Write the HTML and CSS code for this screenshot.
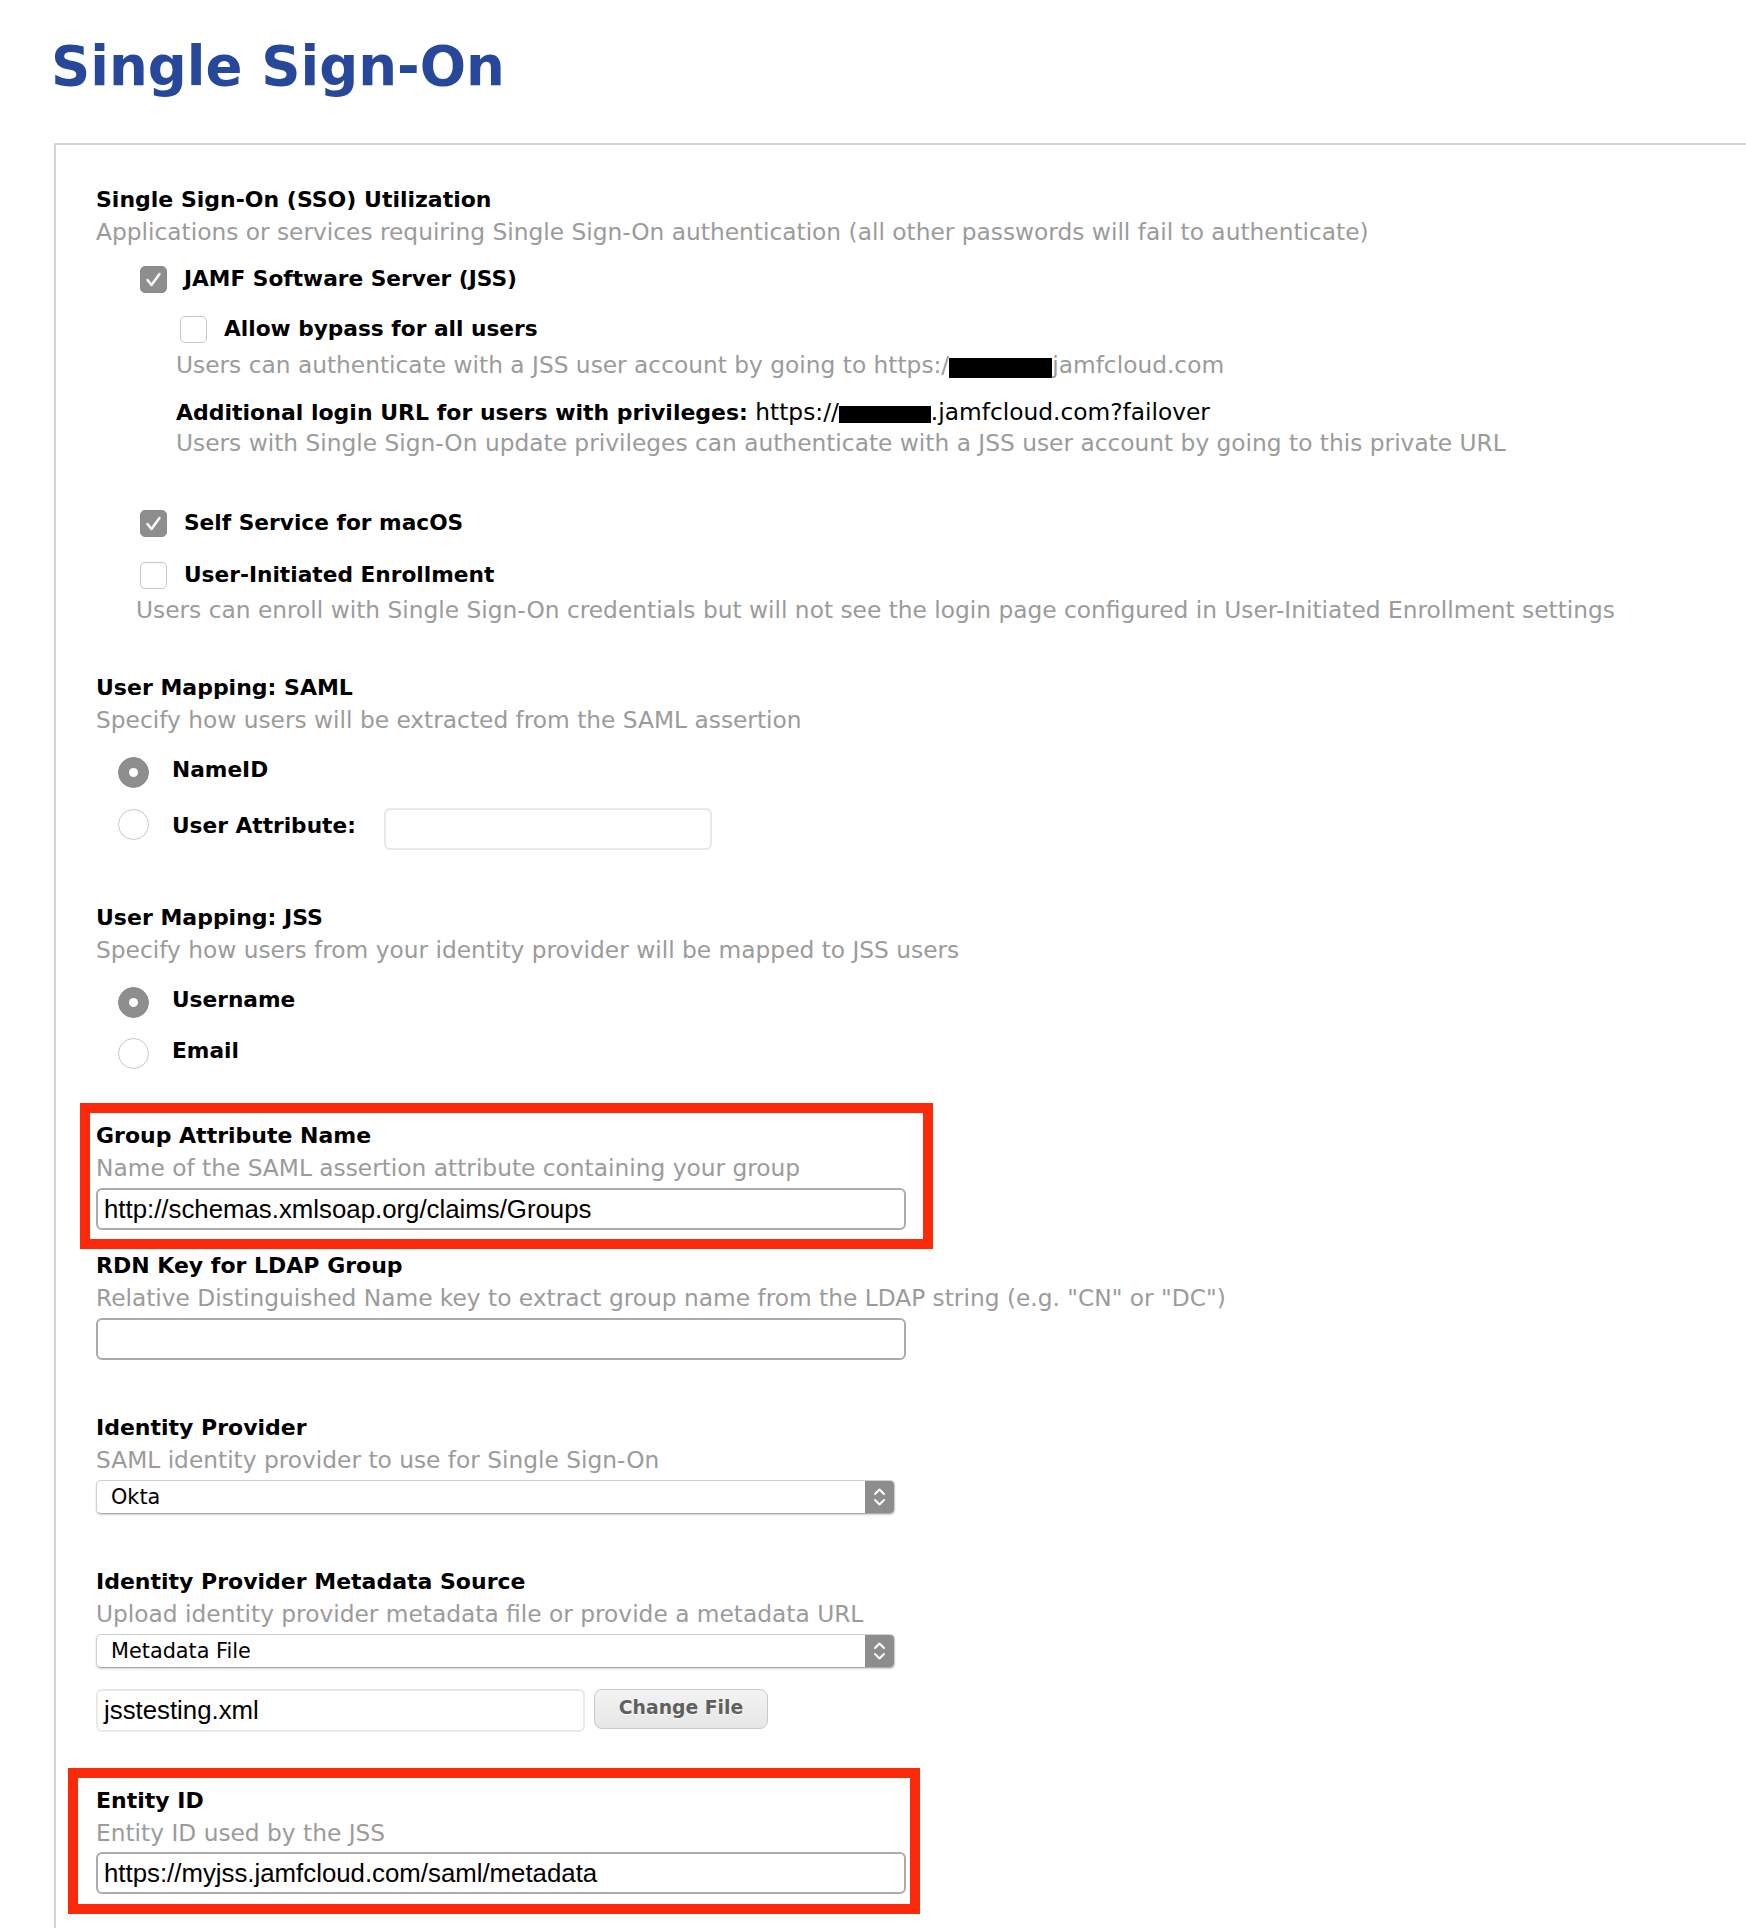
FILE: index.html
```html
<!DOCTYPE html>
<html lang="en">
<head>
<meta charset="utf-8">
<title>Single Sign-On</title>
<link rel="stylesheet" href="styles.css">
</head>
<body>
<div class="page">
  <h1 class="title">Single Sign-On</h1>
  <div class="panel">

    <div class="field">
      <div class="label">Single Sign-On (SSO) Utilization</div>
      <div class="help">Applications or services requiring Single Sign-On authentication (all other passwords will fail to authenticate)</div>
      <div class="lvl1">
        <div class="opt opt-jss"><span class="cb checked"><svg viewBox="0 0 27 27" width="27" height="27"><path d="M7.5 14 L11.5 19 L19.5 8" fill="none" stroke="#fff" stroke-width="2.4" stroke-linecap="round" stroke-linejoin="round"/></svg></span><span class="opt-label">JAMF Software Server (JSS)</span></div>
        <div class="lvl2">
          <div class="opt opt-bypass"><span class="cb"></span><span class="opt-label">Allow bypass for all users</span></div>
          <div class="help help-bypass">Users can authenticate with a JSS user account by going to https:/<span class="redact redact-1"></span>jamfcloud.com</div>
          <div class="priv"><span class="strong">Additional login URL for users with privileges:</span> https://<span class="redact redact-2"></span>.jamfcloud.com?failover</div>
          <div class="help help-priv">Users with Single Sign-On update privileges can authenticate with a JSS user account by going to this private URL</div>
        </div>
        <div class="opt opt-self"><span class="cb checked"><svg viewBox="0 0 27 27" width="27" height="27"><path d="M7.5 14 L11.5 19 L19.5 8" fill="none" stroke="#fff" stroke-width="2.4" stroke-linecap="round" stroke-linejoin="round"/></svg></span><span class="opt-label">Self Service for macOS</span></div>
        <div class="opt opt-uie"><span class="cb"></span><span class="opt-label">User-Initiated Enrollment</span></div>
        <div class="help help-uie">Users can enroll with Single Sign-On credentials but will not see the login page configured in User-Initiated Enrollment settings</div>
      </div>
    </div>

    <div class="field field-saml">
      <div class="label">User Mapping: SAML</div>
      <div class="help">Specify how users will be extracted from the SAML assertion</div>
      <div class="radio-row row-first"><span class="radio checked"></span><span class="opt-label">NameID</span></div>
      <div class="radio-row row-attr"><span class="radio"></span><span class="opt-label">User Attribute:</span><div class="textbox textbox-light textbox-attr"></div></div>
    </div>

    <div class="field field-jss">
      <div class="label">User Mapping: JSS</div>
      <div class="help">Specify how users from your identity provider will be mapped to JSS users</div>
      <div class="radio-row row-first"><span class="radio checked"></span><span class="opt-label">Username</span></div>
      <div class="radio-row row-email"><span class="radio"></span><span class="opt-label">Email</span></div>
    </div>

    <div class="field field-group">
      <div class="label">Group Attribute Name</div>
      <div class="help">Name of the SAML assertion attribute containing your group</div>
      <div class="textbox textbox-full">http://schemas.xmlsoap.org/claims/Groups</div>
      <div class="annot annot-group"></div>
    </div>

    <div class="field field-rdn">
      <div class="label">RDN Key for LDAP Group</div>
      <div class="help">Relative Distinguished Name key to extract group name from the LDAP string (e.g. "CN" or "DC")</div>
      <div class="textbox textbox-full"></div>
    </div>

    <div class="field field-idp">
      <div class="label">Identity Provider</div>
      <div class="help">SAML identity provider to use for Single Sign-On</div>
      <div class="select"><span class="select-text">Okta</span><span class="select-arrow"><svg viewBox="0 0 29 34" width="29" height="34"><path d="M10 14 L14.5 9.5 L19 14" fill="none" stroke="#fff" stroke-width="2" stroke-linecap="round" stroke-linejoin="round"/><path d="M10 20 L14.5 24.5 L19 20" fill="none" stroke="#fff" stroke-width="2" stroke-linecap="round" stroke-linejoin="round"/></svg></span></div>
    </div>

    <div class="field field-meta">
      <div class="label">Identity Provider Metadata Source</div>
      <div class="help">Upload identity provider metadata file or provide a metadata URL</div>
      <div class="select"><span class="select-text">Metadata File</span><span class="select-arrow"><svg viewBox="0 0 29 34" width="29" height="34"><path d="M10 14 L14.5 9.5 L19 14" fill="none" stroke="#fff" stroke-width="2" stroke-linecap="round" stroke-linejoin="round"/><path d="M10 20 L14.5 24.5 L19 20" fill="none" stroke="#fff" stroke-width="2" stroke-linecap="round" stroke-linejoin="round"/></svg></span></div>
      <div class="file-row">
        <div class="textbox textbox-light textbox-file">jsstesting.xml</div>
        <div class="button">Change File</div>
      </div>
    </div>

    <div class="field field-entity">
      <div class="label">Entity ID</div>
      <div class="help">Entity ID used by the JSS</div>
      <div class="textbox textbox-full textbox-entity">https://myjss.jamfcloud.com/saml/metadata</div>
      <div class="annot annot-entity"></div>
    </div>

  </div>
</div>
</body>
</html>
```

FILE: styles.css
```css
html, body {
  margin: 0;
  padding: 0;
  background: #ffffff;
}

body {
  font-family: "DejaVu Sans", "Liberation Sans", sans-serif;
  color: #000000;
  overflow: hidden;
}

.page {
  padding-left: 54px;
}

.title {
  margin: 34px 0 45px -3px;
  font-size: 54.5px;
  line-height: 64px;
  font-weight: bold;
  color: #26479a;
}

.panel {
  border-top: 2px solid #d4d4d4;
  border-left: 2px solid #d4d4d4;
  padding: 39px 0 80px 40px;
}

.field {
  position: relative;
}

.label {
  font-size: 22px;
  line-height: 32px;
  font-weight: bold;
}

.help {
  font-size: 23.3px;
  line-height: 32px;
  color: #9b9b9b;
  white-space: nowrap;
}

.lvl1 {
  padding-left: 40px;
}

.lvl2 {
  padding-left: 40px;
}

.opt {
  display: flex;
  align-items: center;
  height: 32px;
}

.opt-jss { margin-top: 15px; }
.opt-bypass { margin-top: 18px; }
.opt-self { margin-top: 48px; }
.opt-uie { margin-top: 20px; }

.help-bypass { margin-top: 4px; }
.help-priv { margin-top: -2px; }
.help-uie { margin-top: 3px; }

.cb {
  box-sizing: border-box;
  width: 27px;
  height: 27px;
  margin-left: 4px;
  margin-right: 17px;
  border: 1px solid #c6c6c6;
  border-radius: 5px;
  background: #ffffff;
  flex: none;
  display: block;
}

.cb svg {
  display: block;
  margin: -1px;
}

.cb.checked {
  border-color: #8a8a8a;
  background: #8e8e8e;
}

.opt-label {
  font-size: 21.7px;
  line-height: 32px;
  font-weight: bold;
  white-space: nowrap;
}

.priv {
  margin-top: 15px;
  font-size: 23.3px;
  line-height: 32px;
  white-space: nowrap;
}

.strong {
  font-weight: bold;
  font-size: 22px;
}

.redact {
  display: inline-block;
  background: #000000;
}

.redact-1 {
  width: 103px;
  height: 20px;
  vertical-align: -5px;
}

.redact-2 {
  width: 92px;
  height: 17px;
  vertical-align: -3px;
}

.field-saml { margin-top: 46px; }
.field-jss { margin-top: 52px; }
.field-group { margin-top: 53px; }
.field-rdn { margin-top: 20px; }
.field-idp { margin-top: 52px; }
.field-meta { margin-top: 52px; }
.field-entity { margin-top: 53px; }

.radio-row {
  display: flex;
  align-items: flex-start;
  height: 32px;
  padding-left: 22px;
}

.row-first { margin-top: 18px; }
.row-attr { margin-top: 22px; height: 42px; }
.row-email { margin-top: 19px; }

.radio {
  box-sizing: border-box;
  width: 31px;
  height: 31px;
  margin-top: 3px;
  margin-right: 23px;
  border: 1px solid #c8c8c8;
  border-radius: 50%;
  background: #ffffff;
  flex: none;
  position: relative;
}

.row-attr .radio { margin-top: 1px; }
.row-attr .opt-label { margin-top: 2px; }

.radio.checked {
  border-color: #8a8a8a;
  background: #8e8e8e;
}

.radio.checked::after {
  content: "";
  position: absolute;
  left: 50%;
  top: 50%;
  width: 9px;
  height: 9px;
  margin: -4.5px 0 0 -4.5px;
  border-radius: 50%;
  background: #ffffff;
}

.textbox {
  box-sizing: border-box;
  height: 42px;
  border: 2px solid #ababab;
  border-radius: 6px;
  padding: 0 6px;
  font-family: "Liberation Sans", Arial, sans-serif;
  font-size: 25.8px;
  line-height: 38px;
  color: #000000;
  white-space: nowrap;
  background: #ffffff;
}

.textbox-light {
  border: 2px solid #e8e8e8;
}

.textbox-attr {
  width: 328px;
  margin-left: 28px;
}

.textbox-full {
  width: 810px;
  margin-top: 4px;
}

.textbox-entity {
  margin-top: 3px;
}

.select {
  box-sizing: border-box;
  display: flex;
  width: 799px;
  height: 34px;
  margin-top: 4px;
  border: 1px solid #d0d0d0;
  border-bottom-color: #a9a9a9;
  border-radius: 5px;
  background: #ffffff;
  box-shadow: 0 1px 2px rgba(0, 0, 0, 0.18);
  overflow: hidden;
}

.select-text {
  flex: 1;
  padding-left: 14px;
  font-size: 20.8px;
  line-height: 32px;
  white-space: nowrap;
}

.select-arrow {
  width: 29px;
  height: 32px;
  background: #8d8d8d;
  flex: none;
  display: flex;
  align-items: center;
  justify-content: center;
}

.select-arrow svg {
  display: block;
}

.file-row {
  display: flex;
  align-items: flex-start;
  margin-top: 21px;
}

.textbox-file {
  width: 489px;
  height: 43px;
}

.button {
  box-sizing: border-box;
  width: 174px;
  height: 40px;
  margin-left: 9px;
  border: 1px solid #c9c9c9;
  border-radius: 8px;
  background: linear-gradient(#f3f3f3, #e6e6e6);
  color: #5f5f5f;
  font-size: 18.8px;
  font-weight: bold;
  line-height: 36px;
  text-align: center;
  text-shadow: 0 1px 0 #ffffff;
  white-space: nowrap;
}

.annot {
  position: absolute;
  box-sizing: border-box;
  height: 146px;
  border: 10px solid #fb2a0a;
  pointer-events: none;
}

.annot-group {
  top: -17px;
  left: -16px;
  width: 853px;
}

.annot-entity {
  top: -17px;
  left: -28px;
  width: 852px;
}
```
